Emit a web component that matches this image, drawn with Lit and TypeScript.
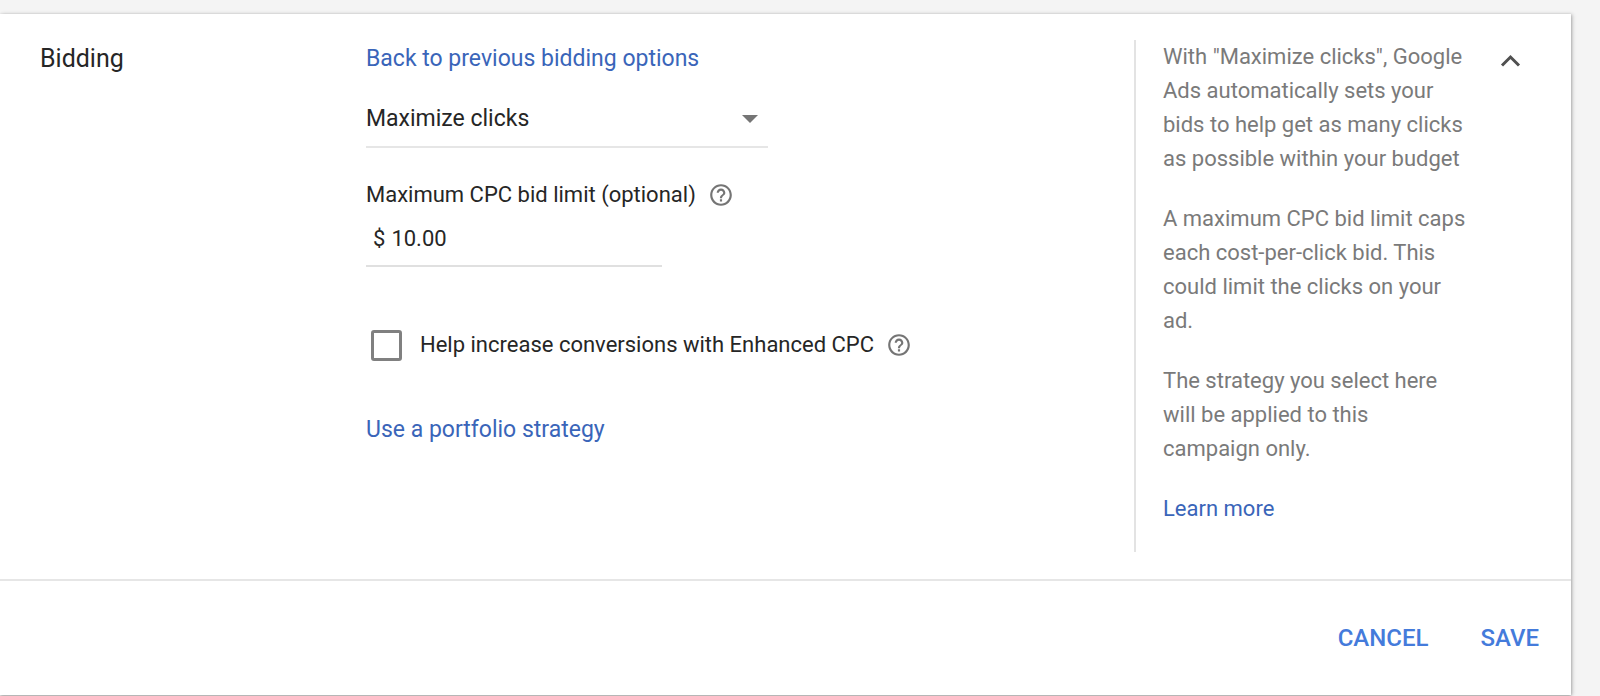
import { LitElement, html, css } from "lit";
import { customElement, property, state } from "lit/decorators.js";

@customElement("help-icon")
class HelpIcon extends LitElement {
  static styles = css`
    :host {
      display: inline-flex;
    }
    .help {
      display: inline-flex;
      padding: 0;
      border: 0;
      background: none;
      color: #757575;
      cursor: pointer;
    }
    .glyph {
      display: block;
      width: 26px;
      height: 26px;
      fill: currentColor;
    }
  `;

  @property() label = "Help";

  render() {
    return html`
      <button class="help" type="button" aria-label=${this.label}>
        <svg class="glyph" viewBox="0 0 24 24" aria-hidden="true">
          <path
            d="M11 18h2v-2h-2v2zm1-16C6.480 2 2 6.480 2 12s4.480 10 10 10 10-4.480 10-10S17.520 2 12 2zm0 18c-4.410 0-8-3.590-8-8s3.590-8 8-8 8 3.590 8 8-3.590 8-8 8zm0-14c-2.210 0-4 1.790-4 4h2c0-1.100.9-2 2-2s2 .9 2 2c0 2-3 1.750-3 5h2c0-2.250 3-2.500 3-5 0-2.210-1.790-4-4-4z"
          ></path>
        </svg>
      </button>
    `;
  }
}

@customElement("app-root")
class AppRoot extends LitElement {
  static styles = css`
    :host {
      display: block;
      box-sizing: border-box;
      min-height: 100vh;
      padding: 14px 29px 1px 0;
      background: #f4f4f4;
      color: #262626;
      font-family: Roboto, "Liberation Sans", sans-serif;
      font-size: 22px;
      line-height: 34px;
    }
    * {
      box-sizing: border-box;
    }
    .card {
      background: #fff;
      box-shadow: 0 1px 3px rgba(0, 0, 0, 0.35), 2px 0 4px rgba(0, 0, 0, 0.12);
    }
    .section {
      display: grid;
      grid-template-columns: 326px minmax(0, 1fr) 349px 56px;
      padding: 26px 32px 27px 40px;
      border-bottom: 2px solid #e6e6e6;
    }
    .title {
      margin: 0;
      padding-top: 2px;
      font-size: 25px;
      font-weight: 400;
    }
    .link {
      color: #3a65b9;
      text-decoration: none;
    }
    .large {
      font-size: 23px;
    }
    .settings {
      display: flex;
      flex-direction: column;
      align-items: flex-start;
      padding-top: 2px;
    }
    .strategy {
      display: flex;
      align-items: center;
      width: 402px;
      max-width: 100%;
      margin: 16px 0 30px;
      border-bottom: 2px solid #e6e6e6;
    }
    .select {
      flex: 1;
      min-width: 0;
      height: 54px;
      padding: 0;
      border: 0;
      outline: 0;
      appearance: none;
      background: none;
      color: inherit;
      font: inherit;
      font-size: 23px;
    }
    .arrow {
      width: 16px;
      height: 8px;
      margin-right: 10px;
      fill: #757575;
      pointer-events: none;
    }
    .row {
      display: flex;
      align-items: center;
      gap: 12px;
    }
    .money {
      display: flex;
      align-items: center;
      gap: 6px;
      width: 296px;
      max-width: 100%;
      height: 55px;
      padding: 0 7px;
      margin-bottom: 61px;
      border-bottom: 2px solid #e0e0e0;
    }
    .amount {
      flex: 1;
      min-width: 0;
      padding: 0;
      border: 0;
      outline: 0;
      background: none;
      color: inherit;
      font: inherit;
    }
    .check {
      display: flex;
      align-items: center;
      gap: 18px;
      padding-left: 5px;
    }
    .box {
      width: 31px;
      height: 31px;
      margin: 0;
      border: 3px solid #808080;
      border-radius: 3px;
      appearance: none;
      background: #fff;
    }
    .box:checked {
      border-color: #4681e0;
      background: #4681e0;
    }
    .portfolio {
      margin-top: 51px;
    }
    .notes {
      display: flex;
      flex-direction: column;
      gap: 26px;
      padding: 0 14px 26px 27px;
      border-left: 2px solid #e3e3e3;
      color: #7a7a7a;
    }
    .note {
      margin: 0;
    }
    .toggle {
      display: flex;
      align-self: start;
      justify-content: center;
      padding: 3px 0;
      border: 0;
      background: none;
      cursor: pointer;
    }
    .chevron {
      width: 36px;
      height: 36px;
      fill: none;
      stroke: #505050;
      stroke-width: 3;
    }
    .actions {
      display: flex;
      justify-content: flex-end;
      gap: 20px;
      padding: 36px 16px;
    }
    .action {
      height: 42px;
      padding: 0 16px;
      border: 0;
      background: none;
      color: #447bdb;
      font: inherit;
      font-size: 24px;
      font-weight: 500;
      cursor: pointer;
    }
  `;

  @state() private enhanced = false;

  private notes = [
    `With "Maximize clicks", Google Ads automatically sets your bids to help get as many clicks as possible within your budget`,
    "A maximum CPC bid limit caps each cost-per-click bid. This could limit the clicks on your ad.",
    "The strategy you select here will be applied to this campaign only.",
  ];

  render() {
    return html`
      <main class="card">
        <section class="section" aria-labelledby="title">
          <h2 class="title" id="title">Bidding</h2>
          <div class="settings">
            <a class="link large" href="#options">Back to previous bidding options</a>
            <div class="strategy">
              <select class="select" aria-label="Bid strategy">
                <option>Maximize clicks</option>
              </select>
              <svg class="arrow" viewBox="0 0 16 8" aria-hidden="true">
                <path d="M0 0h16L8 8z"></path>
              </svg>
            </div>
            <div class="row">
              <label for="limit">Maximum CPC bid limit (optional)</label>
              <help-icon label="About the bid limit"></help-icon>
            </div>
            <div class="money">
              <span>$</span>
              <input class="amount" id="limit" type="text" inputmode="decimal" value="10.00" />
            </div>
            <div class="row">
              <span class="check">
                <input
                  class="box"
                  id="enhanced"
                  type="checkbox"
                  .checked=${this.enhanced}
                  @change=${(e: Event) => (this.enhanced = (e.target as HTMLInputElement).checked)}
                />
                <label for="enhanced">Help increase conversions with Enhanced CPC</label>
              </span>
              <help-icon label="About Enhanced CPC"></help-icon>
            </div>
            <a class="link large portfolio" href="#portfolio">Use a portfolio strategy</a>
          </div>
          <aside class="notes">
            ${this.notes.map((text) => html`<p class="note">${text}</p>`)}
            <a class="link" href="#learn">Learn more</a>
          </aside>
          <button class="toggle" type="button" aria-label="Collapse">
            <svg class="chevron" viewBox="0 0 36 36" aria-hidden="true">
              <path d="M9 22.500l8.500-8.500 8.500 8.500"></path>
            </svg>
          </button>
        </section>
        <footer class="actions">
          <button class="action" type="button">CANCEL</button>
          <button class="action" type="button">SAVE</button>
        </footer>
      </main>
    `;
  }
}
